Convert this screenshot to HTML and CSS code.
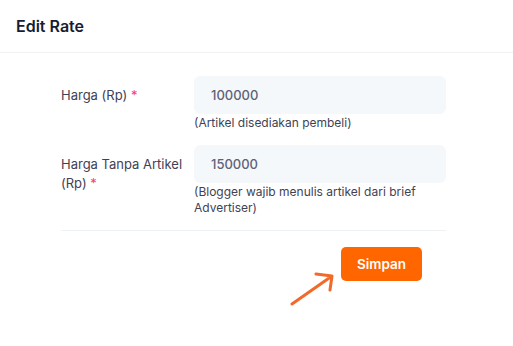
FILE: index.html
```html
<!DOCTYPE html>
<html>
<head>
  <meta charset="utf-8">
  <link rel="stylesheet" href="styles.css">
</head>
<body>
  <div class="modal-header">
    <h1>Edit Rate</h1>
  </div>

  <div class="modal-body">
    <div class="form-row">
      <label for="harga">Harga (Rp) <span class="req">*</span></label>
      <div class="field">
        <input type="text" id="harga" value="100000">
        <div class="help">(Artikel disediakan pembeli)</div>
      </div>
    </div>

    <div class="form-row">
      <label for="hargaTanpa">Harga Tanpa Artikel (Rp) <span class="req">*</span></label>
      <div class="field">
        <input type="text" id="hargaTanpa" value="150000">
        <div class="help">(Blogger wajib menulis artikel dari brief Advertiser)</div>
      </div>
    </div>

    <div class="actions">
      <svg class="pointer" width="50" height="36" viewBox="0 0 50 36">
        <path d="M2 33 L42 5 M26 3 L42 5 L40 19" fill="none" stroke="#f26a2a" stroke-width="3" stroke-linecap="round" stroke-linejoin="round"/>
      </svg>
      <button class="save-btn">Simpan</button>
    </div>
  </div>
</body>
</html>
```

FILE: styles.css
```css
body {
  margin: 0;
  width: 513px;
  font-family: Inter, 'Noto Sans', sans-serif;
  font-size: 13px;
  color: #3f4254;
  background: #fff;
}

.modal-header {
  height: 52px;
  padding: 0 16px;
  display: flex;
  align-items: center;
  border-bottom: 1px solid #eff1f5;
}

h1 {
  margin: 0;
  font-size: 16px;
  font-weight: 600;
  color: #181c32;
}

.modal-body {
  padding: 23px 67px 0 61px;
}

.form-row {
  display: grid;
  grid-template-columns: 133px 1fr;
  margin-bottom: 14px;
}

.form-row:last-of-type {
  margin-bottom: 13px;
}

label {
  padding-top: 10px;
  padding-right: 6px;
  line-height: 19px;
  font-weight: 400;
  color: #3f4254;
}

.req {
  color: #f1416c;
}

input[type="text"] {
  display: block;
  width: 100%;
  height: 38px;
  box-sizing: border-box;
  padding: 0 17px;
  border: none;
  border-radius: 6px;
  background: #f5f8fa;
  font-family: inherit;
  font-size: 13px;
  font-weight: 500;
  color: #5e6278;
}

.help {
  margin-top: 1px;
  font-size: 12px;
  line-height: 16px;
  color: #3f4254;
}

.actions {
  padding-top: 16px;
  border-top: 1px solid #eff2f5;
  display: flex;
  justify-content: flex-end;
  align-items: flex-start;
  padding-right: 24px;
}

.pointer {
  margin-top: 24px;
  margin-right: 1px;
}

.save-btn {
  height: 34px;
  padding: 0 16px;
  border: none;
  border-radius: 5px;
  background: #ff6600;
  color: #fff;
  font-family: inherit;
  font-size: 13.5px;
  font-weight: 600;
  cursor: pointer;
}
```
